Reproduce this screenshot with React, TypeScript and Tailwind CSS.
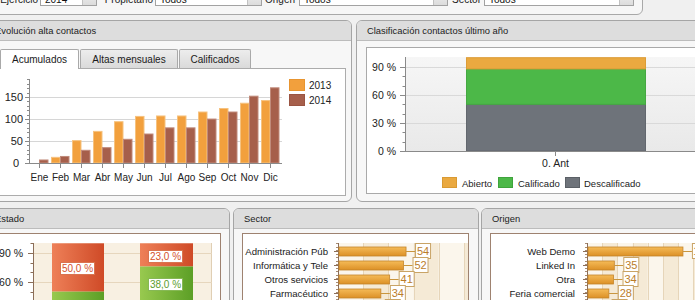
import React from 'react';

const months = ['Ene', 'Feb', 'Mar', 'Abr', 'May', 'Jun', 'Jul', 'Ago', 'Sep', 'Oct', 'Nov', 'Dic'];
const v2013 = [0, 14, 52, 73, 95, 107, 108, 108, 117, 125, 137, 143];
const v2014 = [8, 16, 30, 36, 55, 67, 81, 81, 101, 117, 153, 172];

const sectores = [
  { name: 'Administración Púb', v: 54 },
  { name: 'Informática y Tele', v: 52 },
  { name: 'Otros servicios', v: 41 },
  { name: 'Farmacéutico', v: 34 },
  { name: 'Industria', v: 30 },
];

const origenes = [
  { name: 'Web Demo', v: 123 },
  { name: 'Linked In', v: 35 },
  { name: 'Otra', v: 34 },
  { name: 'Feria comercial', v: 28 },
  { name: 'Email', v: 20 },
];

function Dropdown({ value, className }: { value: string; className: string }) {
  return (
    <div className={`h-[20px] flex border border-[#a2a2a2] bg-white ${className}`}>
      <div className="flex-1 flex items-end pl-[4px] pb-[1px] text-[10px] leading-[8px] text-[#111]">{value}</div>
      <div className="w-[14px] border-l border-[#c2c2c2] bg-gradient-to-b from-[#f7f7f7] to-[#dcdcdc]" />
    </div>
  );
}

function FilterBar() {
  const label = 'h-[20px] flex items-end justify-end pb-[2px] leading-[8px]';
  return (
    <div className="h-[32px] w-[659px] shrink-0 pt-[2px] border border-[#a8a8a8] rounded-b-[6px] bg-[#f6f6f6] flex items-start text-[10px] text-[#1a1a1a]">
      <div className={`w-[55px] pr-[2px] ${label}`}>Ejercicio</div>
      <Dropdown value="2014" className="w-[57px]" />
      <div className={`w-[58px] pr-[2px] ${label}`}>Propietario</div>
      <Dropdown value="Todos" className="w-[107px]" />
      <div className={`w-[37px] pr-[4px] ${label}`}>Origen</div>
      <Dropdown value="Todos" className="w-[149px]" />
      <div className={`w-[36px] pr-[3px] ${label}`}>Sector</div>
      <Dropdown value="Todos" className="w-[150px]" />
    </div>
  );
}

function Panel({ title, className, children }: { title: string; className: string; children: React.ReactNode }) {
  return (
    <div className={`shrink-0 flex flex-col border border-[#a5a5a5] rounded-[6px] bg-[#f7f7f7] overflow-hidden ${className}`}>
      <div className="h-[20px] shrink-0 flex items-center pt-[1px] pl-[10px] border-b border-[#bcbcbc] bg-[#dddddd] text-[9.4px] text-[#222]">
        {title}
      </div>
      <div className="flex-1 min-h-0">{children}</div>
    </div>
  );
}

function EvolucionChart() {
  const y = (v: number) => 163 - v * 0.44;
  const ticks = Array.from({ length: 20 }, (_, i) => i * 10);
  return (
    <svg width={346} height={126} viewBox="-1 69 346 126" className="block">
      {[50, 100, 150].map((v) => (
        <line key={v} x1={29} x2={282} y1={y(v) + 0.5} y2={y(v) + 0.5} stroke="#d6d6d6" />
      ))}
      {months.map((m, i) => {
        const cx = 39 + 21 * i;
        return (
          <g key={m}>
            {v2013[i] > 0 && (
              <rect x={cx - 9 + 0.5} y={y(v2013[i]) + 0.5} width={8.5} height={163 - y(v2013[i]) - 0.5} fill="#f2a03d" stroke="#f6c27f" strokeWidth={1} />
            )}
            <rect x={cx + 0.5} y={y(v2014[i]) + 0.5} width={8.5} height={163 - y(v2014[i]) - 0.5} fill="#a65f4b" stroke="#c08a7a" strokeWidth={1} />
            <line x1={cx + 0.5} x2={cx + 0.5} y1={164} y2={168} stroke="#8a8a8a" />
            <text x={cx + 0.5} y={181} fontSize={10} textAnchor="middle" fill="#222">{m}</text>
          </g>
        );
      })}
      <line x1={29.5} x2={29.5} y1={79} y2={164} stroke="#8a8a8a" />
      <line x1={29} x2={282} y1={163.5} y2={163.5} stroke="#8a8a8a" />
      {ticks.map((v) => (
        <line key={v} x1={v % 50 === 0 ? 25 : 27} x2={29} y1={Math.round(y(v)) + 0.5} y2={Math.round(y(v)) + 0.5} stroke="#8a8a8a" />
      ))}
      {[150, 100, 50].map((v) => (
        <text key={v} x={23} y={y(v) + 4} fontSize={11} textAnchor="end" fill="#222">{v}</text>
      ))}
      <text x={19} y={167} fontSize={11} textAnchor="end" fill="#222">0</text>
      <rect x={289.5} y={79.5} width={15} height={11} fill="#f2a03d" stroke="#e89530" />
      <text x={309} y={89} fontSize={10} fill="#222">2013</text>
      <rect x={289.5} y={94.5} width={15} height={11} fill="#a65f4b" stroke="#9a5442" />
      <text x={309} y={104} fontSize={10} fill="#222">2014</text>
    </svg>
  );
}

function ClasificacionChart() {
  const y = (p: number) => 151 - p * 0.933;
  const ticks = Array.from({ length: 10 }, (_, i) => i * 10);
  return (
    <svg width={360} height={145} viewBox="367 48 360 145" className="block">
      <defs>
        <linearGradient id="clsBg" x1="0" y1="0" x2="0" y2="1">
          <stop offset="0" stopColor="#f6f6f6" />
          <stop offset="1" stopColor="#e9e9e9" />
        </linearGradient>
      </defs>
      <rect x={405} y={57} width={330} height={94} fill="url(#clsBg)" />
      {[30, 60, 90].map((p) => (
        <line key={p} x1={405} x2={735} y1={Math.round(y(p)) + 0.5} y2={Math.round(y(p)) + 0.5} stroke="#d9d9d9" />
      ))}
      <rect x={466.5} y={y(50)} width={179} height={151 - y(50)} fill="#6e737a" stroke="#62676e" />
      <rect x={466.5} y={y(88)} width={179} height={y(50) - y(88)} fill="#4cb848" stroke="#45a842" />
      <rect x={466.5} y={y(100)} width={179} height={y(88) - y(100)} fill="#eaa940" stroke="#dc9c36" />
      <line x1={405.5} x2={405.5} y1={57} y2={152} stroke="#8a8a8a" />
      <line x1={405} x2={735} y1={151.5} y2={151.5} stroke="#8a8a8a" />
      {ticks.map((p) => (
        <line key={p} x1={p % 30 === 0 ? 400 : 402.5} x2={405} y1={Math.round(y(p)) + 0.5} y2={Math.round(y(p)) + 0.5} stroke="#8a8a8a" />
      ))}
      {[90, 60, 30, 0].map((p) => (
        <text key={p} x={396} y={y(p) + 4} fontSize={10.5} textAnchor="end" fill="#222">{p} %</text>
      ))}
      <line x1={555.5} x2={555.5} y1={152} y2={156} stroke="#8a8a8a" />
      <text x={555.5} y={167} fontSize={10.5} textAnchor="middle" fill="#222">0. Ant</text>
      <rect x={442.5} y={177.5} width={14} height={10} fill="#eaa940" stroke="#d99a33" />
      <text x={462} y={186.5} fontSize={9.5} fill="#222">Abierto</text>
      <rect x={498.5} y={177.5} width={14} height={10} fill="#4cb848" stroke="#3fa33c" />
      <text x={518} y={186.5} fontSize={9.5} fill="#222">Calificado</text>
      <rect x={565.5} y={177.5} width={14} height={10} fill="#6e737a" stroke="#5b6066" />
      <text x={584} y={186.5} fontSize={9.5} fill="#222">Descalificado</text>
    </svg>
  );
}

function EstadoChart() {
  const y = (p: number) => 340 - p * 0.967;
  const ticks = Array.from({ length: 10 }, (_, i) => i * 10 + 10);
  return (
    <svg width={226} height={90} viewBox="-6 234 226 90" className="block">
      <defs>
        <linearGradient id="estRed" x1="0" y1="0" x2="1" y2="0">
          <stop offset="0" stopColor="#ee8058" />
          <stop offset="1" stopColor="#cf4a27" />
        </linearGradient>
        <linearGradient id="estGreen" x1="0" y1="0" x2="1" y2="0">
          <stop offset="0" stopColor="#98c94f" />
          <stop offset="1" stopColor="#5c9f26" />
        </linearGradient>
      </defs>
      <rect x={33} y={243} width={179} height={90} fill="#f8f0e2" />
      <line x1={211.5} x2={211.5} y1={243} y2={330} stroke="#e0cfb4" />
      {[90, 60].map((p) => (
        <line key={p} x1={33} x2={212} y1={Math.round(y(p)) + 0.5} y2={Math.round(y(p)) + 0.5} stroke="#e6d6bd" />
      ))}
      <rect x={52} y={y(100)} width={52} height={y(50) - y(100)} fill="url(#estRed)" />
      <rect x={52} y={y(50)} width={52} height={60} fill="url(#estGreen)" />
      <rect x={140} y={y(100)} width={53} height={y(76) - y(100)} fill="url(#estRed)" />
      <rect x={140} y={y(76)} width={53} height={y(38) - y(76)} fill="url(#estGreen)" />
      <rect x={140} y={y(38)} width={53} height={40} fill="#4f86c6" />
      <line x1={33.5} x2={33.5} y1={243} y2={330} stroke="#8c6e58" />
      {ticks.map((p) => (
        <line key={p} x1={p % 30 === 0 ? 28 : 30.5} x2={33} y1={Math.round(y(p)) + 0.5} y2={Math.round(y(p)) + 0.5} stroke="#8c6e58" />
      ))}
      {[90, 60].map((p) => (
        <text key={p} x={23} y={y(p) + 4} fontSize={10.5} textAnchor="end" fill="#222">{p} %</text>
      ))}
      <rect x={60.5} y={262.5} width={34} height={12} fill="#fff" stroke="#d9734f" />
      <text x={77.5} y={272} fontSize={10} textAnchor="middle" fill="#d4512b">50,0 %</text>
      <rect x={148.5} y={250.5} width={34} height={12} fill="#fff" stroke="#d9734f" />
      <text x={165.5} y={260} fontSize={10} textAnchor="middle" fill="#d4512b">23,0 %</text>
      <rect x={148.5} y={278.5} width={34} height={12} fill="#fff" stroke="#86b855" />
      <text x={165.5} y={288} fontSize={10} textAnchor="middle" fill="#5c9d2d">38,0 %</text>
    </svg>
  );
}

function HBarChart({
  data,
  x0,
  scale,
  step,
  vbx,
  width,
  labelEnd,
  id,
}: {
  data: { name: string; v: number }[];
  x0: number;
  scale: number;
  step: number;
  vbx: number;
  width: number;
  labelEnd: number;
  id: string;
}) {
  const right = vbx + width;
  const bands = [];
  for (let k = 0; x0 + k * step < right; k++) bands.push(k);
  const minor = Array.from({ length: 26 }, (_, i) => 243 + i * 3.5);
  return (
    <svg width={width} height={90} viewBox={`${vbx} 234 ${width} 90`} className="block">
      <defs>
        <linearGradient id={id} x1="0" y1="0" x2="0" y2="1">
          <stop offset="0" stopColor="#f5bb58" />
          <stop offset="1" stopColor="#dc9026" />
        </linearGradient>
      </defs>
      {bands.map((k) => (
        <rect key={k} x={x0 + k * step} y={243} width={step} height={90} fill={k % 2 === 0 ? '#fbf6ec' : '#f5ead6'} />
      ))}
      {bands.map((k) => (
        <line key={k} x1={Math.round(x0 + (k + 1) * step) + 0.5} x2={Math.round(x0 + (k + 1) * step) + 0.5} y1={243} y2={333} stroke="#e6d5b9" />
      ))}
      <line x1={x0 + 0.5} x2={x0 + 0.5} y1={243} y2={333} stroke="#8c6e58" />
      {minor.map((yy) => (
        <line key={yy} x1={x0 - 2} x2={x0} y1={Math.round(yy) + 0.5} y2={Math.round(yy) + 0.5} stroke="#a88c74" />
      ))}
      {data.map((d, i) => {
        const cy = 251 + i * 14;
        const end = x0 + d.v * scale;
        const bw = String(d.v).length > 2 ? 20 : 15;
        return (
          <g key={d.name}>
            <line x1={x0 - 4} x2={x0} y1={cy + 0.5} y2={cy + 0.5} stroke="#8c6e58" />
            <text x={labelEnd} y={cy + 3.5} fontSize={9.6} textAnchor="end" fill="#1a1a1a">{d.name}</text>
            <rect x={x0 + 1} y={cy - 4} width={end - x0 - 1} height={9} fill={`url(#${id})`} stroke="#c4842c" strokeWidth={0.8} />
            <line x1={end} x2={end + 9} y1={cy + 0.5} y2={cy + 0.5} stroke="#c9963f" />
            <rect x={end + 9.5} y={cy - 7.5} width={bw} height={15} fill="#fff" stroke="#c9a466" />
            <text x={end + 9.5 + bw / 2} y={cy + 4} fontSize={11} textAnchor="middle" fill="#bb7d2b">{d.v}</text>
          </g>
        );
      })}
    </svg>
  );
}

export default function App() {
  return (
    <div className="w-[695px] h-[300px] overflow-hidden bg-[#f0f0f0] font-['Liberation_Sans',Arial,sans-serif] text-[#222]">
      <div className="-ml-[16px] -mt-[17px] w-[760px] flex flex-col">
        <FilterBar />

        {/* Row 1 */}
        <div className="mt-[5px] flex gap-[4px] h-[182px] shrink-0">
          <Panel title="Evolución alta contactos" className="w-[368px]">
            <div className="pt-[8px] pl-[13px]">
              <div className="flex gap-[1px] ml-[2px] h-[19px] items-start text-[10px] text-[#1a1a1a]">
                <div className="relative z-10 w-[79px] h-[20px] flex items-center justify-center pb-[1px] border border-b-0 border-[#a9a9a9] rounded-t-[2px] bg-white">
                  Acumulados
                </div>
                <div className="w-[98px] h-[19px] flex items-center justify-center border border-b-0 border-[#a9a9a9] rounded-t-[2px] bg-gradient-to-b from-[#ededed] to-[#dadada]">
                  Altas mensuales
                </div>
                <div className="w-[72px] h-[19px] flex items-center justify-center border border-b-0 border-[#a9a9a9] rounded-t-[2px] bg-gradient-to-b from-[#ededed] to-[#dadada]">
                  Calificados
                </div>
              </div>
              <div className="w-[348px] h-[128px] border border-[#acacac] bg-white">
                <EvolucionChart />
              </div>
            </div>
          </Panel>

          <Panel title="Clasificación contactos último año" className="w-[370px]">
            <div className="pt-[6px] pl-[9px]">
              <div className="w-[362px] h-[147px] border border-[#a9a9a9] bg-white">
                <ClasificacionChart />
              </div>
            </div>
          </Panel>
        </div>

        {/* Row 2 */}
        <div className="mt-[6px] flex h-[120px] shrink-0">
          <Panel title="Estado" className="w-[246px]">
            <div className="pt-[4px] px-[8px]">
              <div className="h-[100px] border border-[#9e8270] bg-white">
                <EstadoChart />
              </div>
            </div>
          </Panel>

          <Panel title="Sector" className="w-[246px] ml-[3px]">
            <div className="pt-[4px] pl-[8px] pr-[9px]">
              <div className="h-[100px] border border-[#9e8270] bg-white">
                <HBarChart data={sectores} x0={338} scale={1.26} step={25.2} vbx={243} width={225} labelEnd={328} id="secGrad" />
              </div>
            </div>
          </Panel>

          <Panel title="Origen" className="w-[260px] ml-[2px]">
            <div className="pt-[4px] pl-[8px]">
              <div className="w-[240px] h-[100px] border border-[#9e8270] bg-white">
                <HBarChart data={origenes} x0={587} scale={0.78} step={15.2} vbx={491} width={238} labelEnd={575} id="oriGrad" />
              </div>
            </div>
          </Panel>
        </div>
      </div>
    </div>
  );
}
